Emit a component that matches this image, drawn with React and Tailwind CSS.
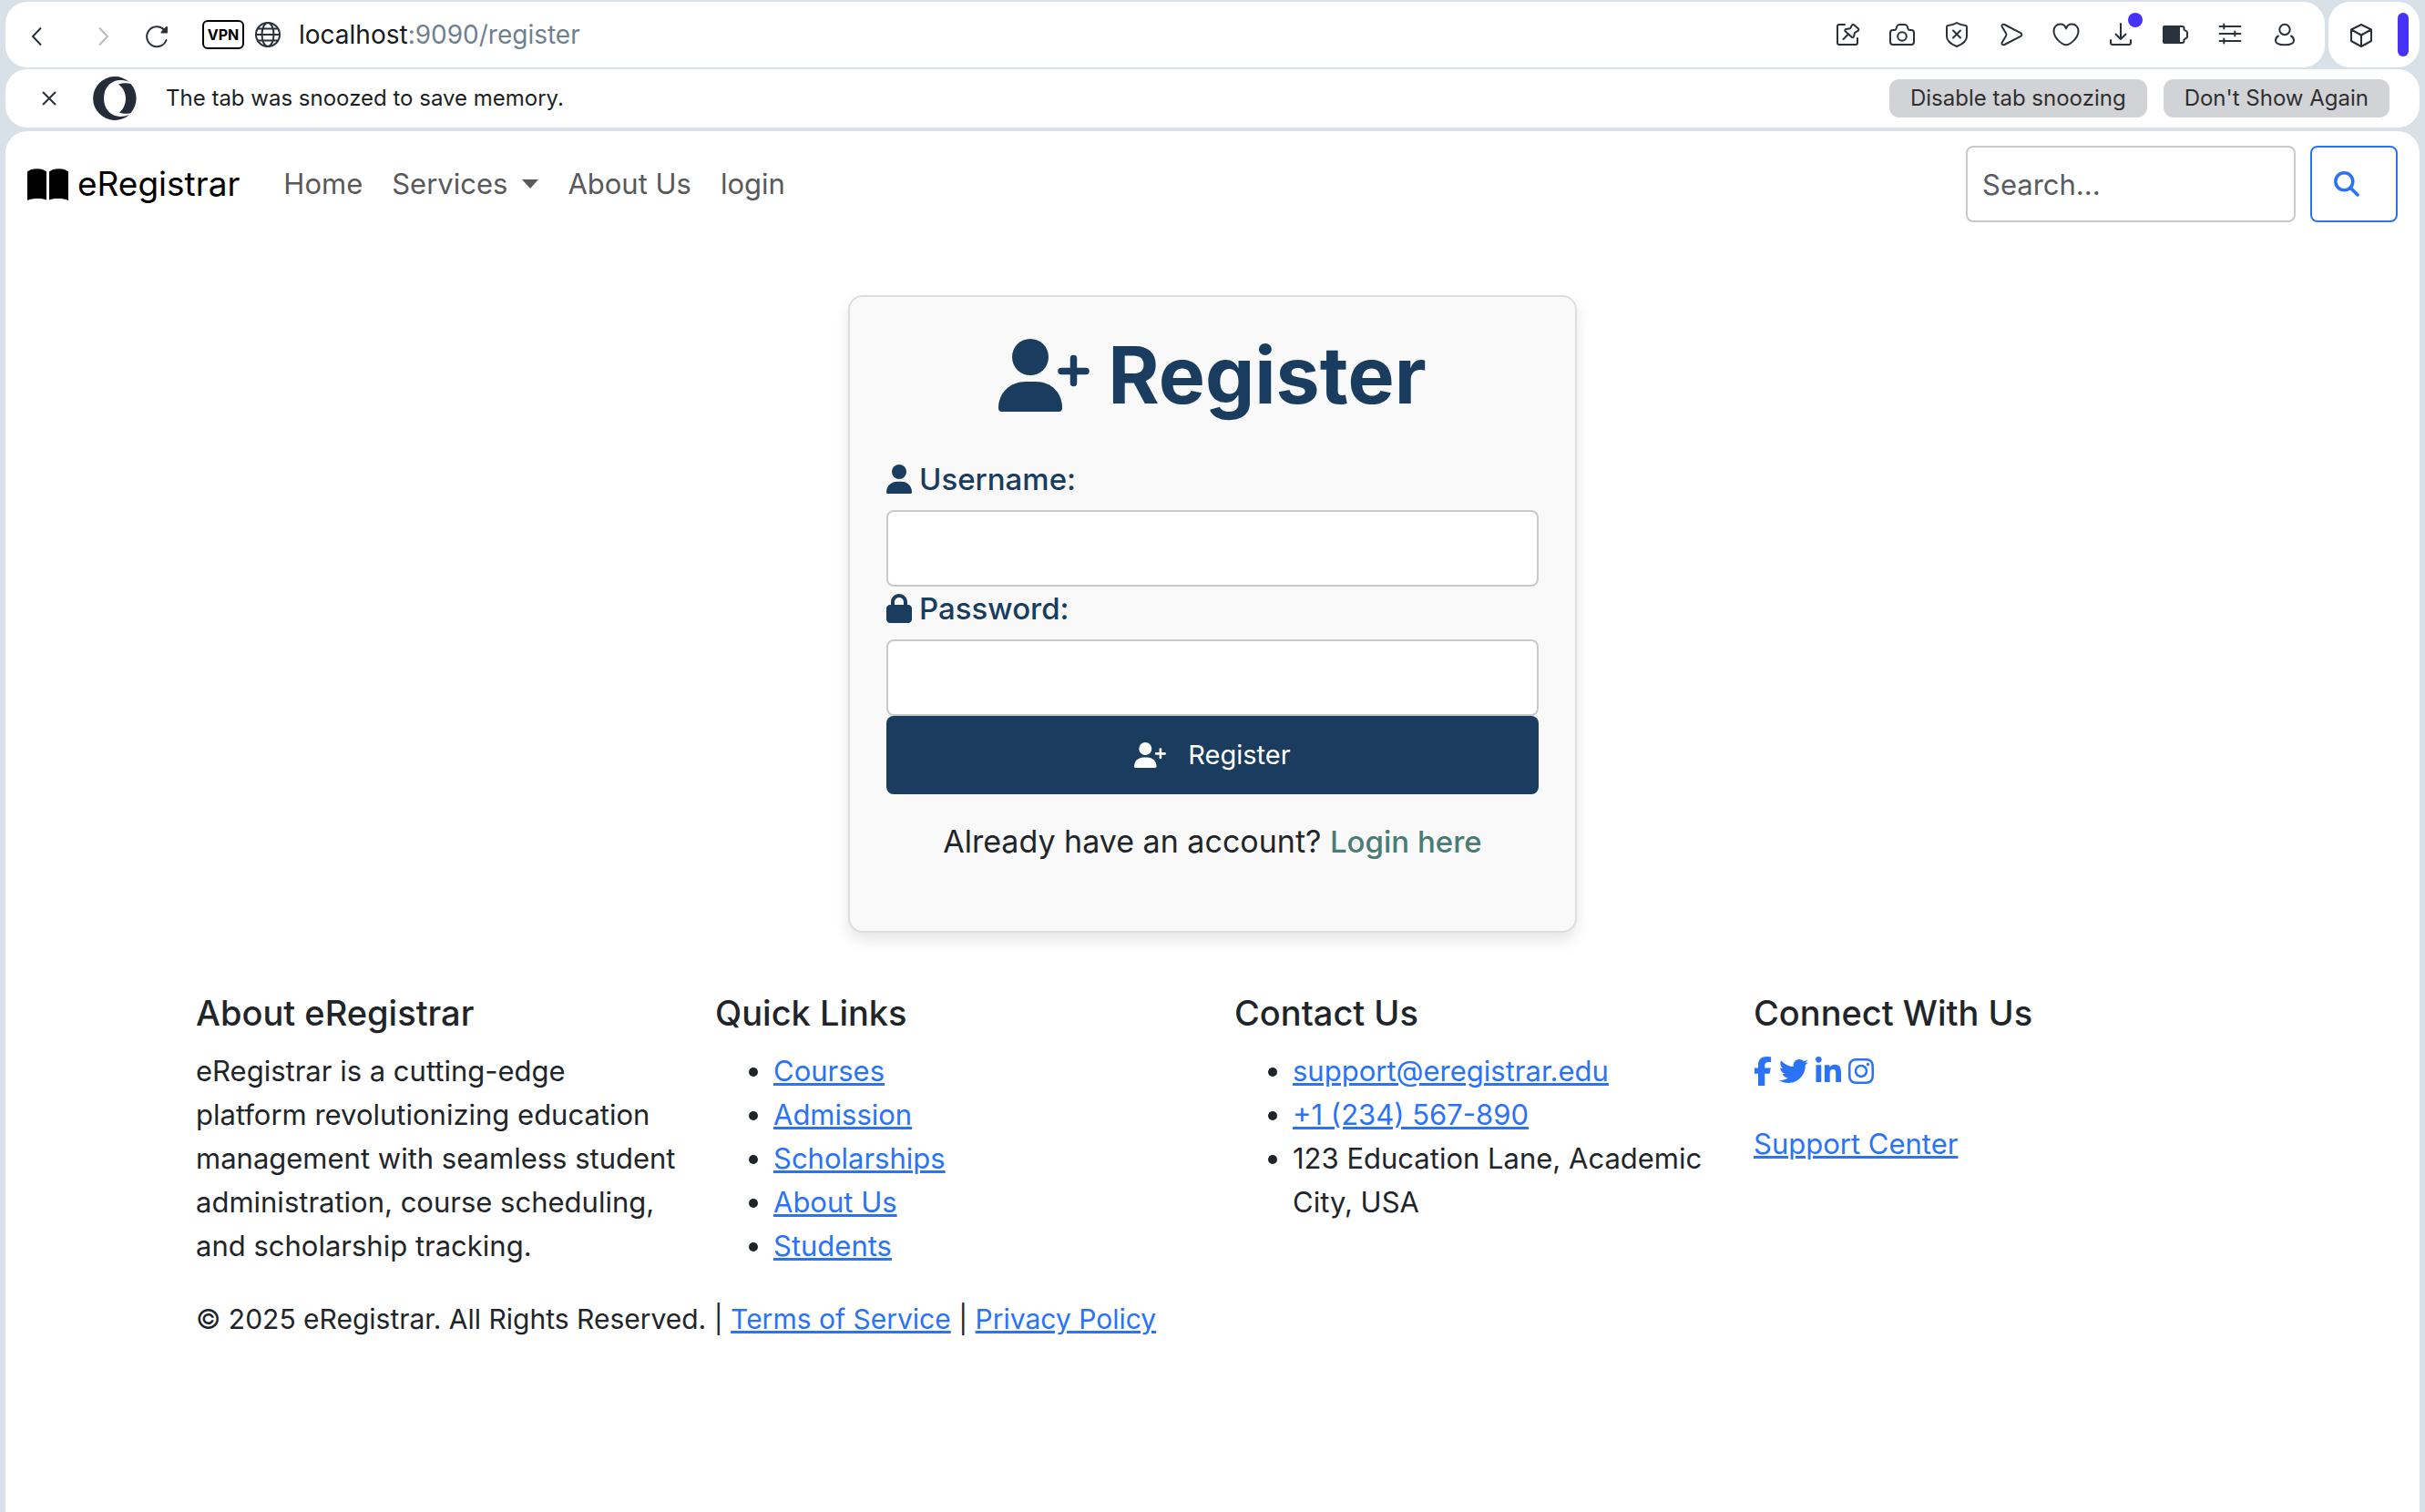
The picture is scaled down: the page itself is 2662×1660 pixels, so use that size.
import { FaLock, FaFacebookF, FaTwitter, FaLinkedinIn, FaInstagram } from "react-icons/fa6";

const fieldClass =
  "block h-[84px] w-full rounded-lg border-2 border-[#c9c9c9] bg-white px-4 text-[31px] text-[#212529] outline-none";
const linkClass = "text-[#2a72f8] underline decoration-[3px] underline-offset-2";

function LineIcon({ className = "h-8 w-8", children }) {
  return (
    <svg
      viewBox="0 0 32 32"
      className={className}
      fill="none"
      stroke="currentColor"
      strokeWidth="2"
      strokeLinecap="round"
      strokeLinejoin="round"
      aria-hidden="true"
    >
      {children}
    </svg>
  );
}

function UserShape() {
  return (
    <>
      <circle cx="35" cy="20" r="20" />
      <path d="M0 76C0 59 13 47 30 47H41C58 47 70 59 70 76Q70 80 66 80H4Q0 80 0 76Z" />
    </>
  );
}

function UserIcon() {
  return (
    <svg viewBox="0 0 70 80" className="h-8 w-7 shrink-0" fill="currentColor" aria-hidden="true">
      <UserShape />
    </svg>
  );
}

function UserPlusIcon({ className }) {
  return (
    <svg viewBox="0 0 100 80" className={className} fill="currentColor" aria-hidden="true">
      <UserShape />
      <path
        d="M82.500 21.500V48.500M69 35.500H96"
        fill="none"
        stroke="currentColor"
        strokeWidth="7.500"
        strokeLinecap="round"
      />
    </svg>
  );
}

function BookIcon() {
  return (
    <svg viewBox="0 0 45 35" className="h-[35px] w-[45px] shrink-0" fill="currentColor" aria-hidden="true">
      <path d="M0 3.500C4-1 17-1 21 3.500V34.500C15 32.500 6 32.500 0 35Z" />
      <path d="M24 3.500C28-1 41-1 45 3.500V35C39 32.500 30 32.500 24 34.500Z" />
    </svg>
  );
}

function OperaLogo() {
  return (
    <svg viewBox="0 0 48 48" className="h-12 w-12 shrink-0" fill="#232c38" aria-hidden="true">
      <path d="M40 6A24 24 0 1 0 40 42C24 48 12 39 12 24C12 9 24 0 40 6Z" />
      <path d="M28 8.500C33 7 38 7 41.500 8A24 24 0 0 1 41.500 40C38 41.200 33 41.200 29 39.500C33.500 36 36 30 36 24C36 18 33 12 28 8.500Z" />
    </svg>
  );
}

const toolbarIcons = [
  {
    label: "Pin page",
    art: (
      <>
        <path d="M13 5H7a2 2 0 0 0-2 2v18a2 2 0 0 0 2 2h18a2 2 0 0 0 2-2v-5" />
        <path d="M21 5.500Q22.500 4.300 24 6L28 9.500Q29 11 27 12.200L24 14L23 18Q22 20 20.500 18.500L13.800 12.500Q12.500 11 14.500 10L19 9.300ZM17 15.500L11.500 21" />
      </>
    ),
  },
  {
    label: "Snapshot",
    art: (
      <>
        <path d="M3 24V14a3 3 0 0 1 3-3h1.500a2 2 0 0 0 2-1.500l.8-2.500a3 3 0 0 1 3-2h5.400a3 3 0 0 1 3 2l.8 2.500a2 2 0 0 0 2 1.500H26a3 3 0 0 1 3 3v10a3 3 0 0 1-3 3H6a3 3 0 0 1-3-3Z" />
        <circle cx="16" cy="18" r="4.800" />
      </>
    ),
  },
  {
    label: "Ad blocker",
    art: (
      <>
        <path d="M16 3c3 2 7 2.700 9.500 3a1.700 1.700 0 0 1 1.500 1.700V18c0 5-6 9-11 11-5-2-11-6-11-11V7.700A1.700 1.700 0 0 1 6.500 6C9 5.700 13 5 16 3Z" />
        <path d="M12 11.500l8 8M20 11.500l-8 8" />
      </>
    ),
  },
  {
    label: "Send",
    art: (
      <path d="M5.500 7C5 5.200 6.800 4.300 8.500 5L26 14.200C27.800 15.300 27.800 16.700 26 17.800L8.500 27C6.800 27.700 5 26.800 5.500 25L10 17.500Q11 16 10 14.500Z" />
    ),
  },
  {
    label: "Bookmark",
    art: (
      <path d="M16 9.500c.8-3 3.300-5 6.300-5 4.300 0 7.200 3.300 7.200 7.500C29.500 20 20 27.300 16 27.300S2.500 20 2.500 12c0-4.200 2.900-7.500 7.200-7.500 3 0 5.500 2 6.300 5Z" />
    ),
  },
  {
    label: "Downloads",
    badge: true,
    art: <path d="M16 4v17M10.500 15.500L16 21l5.500-5.500M5 22v3a2 2 0 0 0 2 2h18a2 2 0 0 0 2-2v-3" />,
  },
  {
    label: "Battery saver",
    art: (
      <>
        <path d="M4.500 7H23.500a2 2 0 0 1 2 2v1.500l2 1.500a2 2 0 0 1 1.500 1.700v4.600a2 2 0 0 1-1.500 1.700l-2 1.500V23a2 2 0 0 1-2 2H4.500A1.500 1.500 0 0 1 3 23.500v-15A1.500 1.500 0 0 1 4.500 7Z" />
        <path d="M3 7.500H20V24.500H3Z" fill="currentColor" />
      </>
    ),
  },
  {
    label: "Easy setup",
    art: <path d="M4.500 7h23M4.500 15h23M4.500 23h23M9.300 4.500v5M21.300 12.500v5M9.300 20.500v5" />,
  },
  {
    label: "Profile",
    art: (
      <>
        <circle cx="16" cy="10.500" r="5.700" />
        <path d="M9 17.500C7 18.500 6 20.500 6 22.500C6 26 10.500 27.300 16 27.300S26 26 26 22.500C26 20.500 25 18.500 23 17.500" />
      </>
    ),
  },
];

function Toolbar() {
  return (
    <div className="flex h-[72px] gap-1">
      <div className="flex flex-1 items-center rounded-3xl bg-white pr-3.5 pl-7 text-[#29323b]">
        <button type="button" aria-label="Back" className="mt-1">
          <svg viewBox="0 0 12 22" className="h-[22px] w-3" fill="none" stroke="currentColor" strokeWidth="2">
            <path d="M11 1.500L2 11L11 20.500" />
          </svg>
        </button>
        <button type="button" aria-label="Forward" className="mt-1 ml-[62px] text-[#b9bbbe]">
          <svg viewBox="0 0 12 22" className="h-[22px] w-3" fill="none" stroke="currentColor" strokeWidth="2">
            <path d="M1 1.500L10 11L1 20.500" />
          </svg>
        </button>
        <button type="button" aria-label="Reload" className="mt-1 ml-9">
          <LineIcon className="h-8 w-8">
            <path d="M26.500 20A11 11 0 1 1 24 8.500" />
            <path d="M27 6V11.500H21.500Z" fill="currentColor" />
          </LineIcon>
        </button>
        <button
          type="button"
          className="ml-[34px] flex h-8 w-[46px] items-center justify-center rounded-md border-2 border-black text-base font-bold text-black"
        >
          VPN
        </button>
        <button type="button" aria-label="Site information" className="ml-2.5">
          <LineIcon className="h-8 w-8">
            <circle cx="16" cy="16" r="13" />
            <ellipse cx="16" cy="16" rx="6.500" ry="13" />
            <path d="M3 16H29M5 9.500H27M5 22.500H27" />
          </LineIcon>
        </button>
        <p className="ml-[18px] text-[28px] leading-9 text-[#16191d]">
          localhost<span className="text-[#70808f]">:9090/register</span>
        </p>
        <div className="ml-auto flex">
          {toolbarIcons.map(({ label, art, badge }) => (
            <button key={label} type="button" aria-label={label} className="relative flex w-[60px] justify-center">
              <LineIcon>{art}</LineIcon>
              {badge && <span className="absolute -top-2 right-1.5 h-4 w-4 rounded-full bg-[#4632f5]" />}
            </button>
          ))}
        </div>
      </div>
      <div className="flex items-center justify-between rounded-3xl bg-white pr-3 pl-5 text-[#29323b]">
        <button type="button" aria-label="Extensions" className="mr-6">
          <LineIcon>
            <path d="M16 5L27 10.500V23L16 29L5 23V10.500ZM5 10.500L16 16.500L27 10.500M16 16.500V29" />
          </LineIcon>
        </button>
        <span className="h-12 w-3 rounded-full bg-[#4632f5]" />
      </div>
    </div>
  );
}

function SnoozeBar() {
  const buttonClass = "h-[42px] rounded-[11px] bg-[#d2d3d7] px-[23px] text-[#2f2f2f]";
  return (
    <div className="mt-0.5 flex h-16 items-center rounded-3xl bg-white pr-[33px] pl-10 text-2xl text-[#1b1f24]">
      <button type="button" aria-label="Close">
        <svg viewBox="0 0 16 16" className="h-4 w-4" fill="none" stroke="#29323b" strokeWidth="2">
          <path d="M1 1L15 15M15 1L1 15" />
        </svg>
      </button>
      <span className="ml-10">
        <OperaLogo />
      </span>
      <p className="ml-8">The tab was snoozed to save memory.</p>
      <div className="ml-auto flex gap-[18px]">
        <button type="button" className={buttonClass}>Disable tab snoozing</button>
        <button type="button" className={buttonClass}>Don't Show Again</button>
      </div>
    </div>
  );
}

function NavBar() {
  return (
    <nav className="flex items-center justify-between px-6 py-4">
      <div className="flex items-center">
        <a href="#home" className="flex items-center gap-[10px] text-[37px] leading-[48px] text-black">
          <BookIcon />
          eRegistrar
        </a>
        <div className="ml-12 flex gap-8 text-[31px] leading-[48px] text-[#595959]">
          <a href="#home">Home</a>
          <button type="button" className="flex items-center">
            Services
            <svg viewBox="0 0 18 10" className="ml-4 h-2.5 w-[18px]" fill="currentColor" aria-hidden="true">
              <path d="M0 0H18L9 10Z" />
            </svg>
          </button>
          <a href="#about">About Us</a>
          <a href="#login">login</a>
        </div>
      </div>
      <form className="flex gap-4" onSubmit={(e) => e.preventDefault()}>
        <div className="w-[362px]">
          <input
            type="search"
            aria-label="Search"
            placeholder="Search..."
            className="block h-[84px] w-full rounded-lg border-2 border-[#c9c9c9] bg-white px-4 text-[31px] text-[#212529] outline-none placeholder:text-[#595c5f]"
          />
        </div>
        <button
          type="submit"
          aria-label="Submit search"
          className="flex h-[84px] w-24 items-center rounded-lg border-2 border-[#2a72f8] pl-6 text-[#2a72f8]"
        >
          <svg
            viewBox="0 0 28 28"
            className="h-7 w-7"
            fill="none"
            stroke="currentColor"
            strokeWidth="3.500"
            strokeLinecap="round"
            aria-hidden="true"
          >
            <circle cx="11.300" cy="11.300" r="9.500" />
            <path d="M18.500 18.500L26 26" />
          </svg>
        </button>
      </form>
    </nav>
  );
}

function RegisterCard() {
  return (
    <section className="mx-auto mt-16 w-full max-w-[800px] rounded-2xl border-2 border-[#dddddd] bg-[#f9f9f9] p-10 shadow-[0_8px_16px_rgba(0,0,0,0.1)]">
      <h1 className="mb-11 flex items-center justify-center gap-5 text-[86px] leading-[92px] font-bold text-[#1a3c5e]">
        <UserPlusIcon className="h-20 w-[100px] shrink-0" />
        Register
      </h1>
      <form onSubmit={(e) => e.preventDefault()}>
        <label
          htmlFor="username"
          className="mb-2.5 flex items-center gap-2 text-[33px] leading-[48px] font-medium text-[#1a3c5e]"
        >
          <UserIcon />
          Username:
        </label>
        <input id="username" type="text" className={fieldClass} />
        <label
          htmlFor="password"
          className="mb-2.5 flex items-center gap-2 text-[33px] leading-[48px] font-medium text-[#1a3c5e]"
        >
          <FaLock className="h-8 w-7 shrink-0" />
          Password:
        </label>
        <input id="password" type="password" className={fieldClass} />
        <button
          type="submit"
          className="flex h-[86px] w-full items-center justify-center gap-6 rounded-lg bg-[#1a3c5e] text-[29px] text-white"
        >
          <UserPlusIcon className="h-7 w-[35px]" />
          Register
        </button>
      </form>
      <p className="mt-7 mb-[34px] text-center text-[34px] leading-[48px] text-[#212529]">
        Already have an account?{" "}
        <a href="#login" className="text-[33px] font-medium text-[#4a7c76]">
          Login here
        </a>
      </p>
    </section>
  );
}

const quickLinks = ["Courses", "Admission", "Scholarships", "About Us", "Students"];
const socials = [
  { label: "Facebook", Icon: FaFacebookF, size: "h-8 w-5" },
  { label: "Twitter", Icon: FaTwitter, size: "h-8 w-8" },
  { label: "LinkedIn", Icon: FaLinkedinIn, size: "h-8 w-7" },
  { label: "Instagram", Icon: FaInstagram, size: "h-8 w-7" },
];

function Footer() {
  const heading = "mb-4 text-[38px] leading-[48px] font-medium";
  const list = "mb-8 list-disc pl-16";
  return (
    <footer className="mx-auto mt-16 w-full max-w-[2280px] text-[31px] leading-[48px] text-[#212529]">
      <div className="grid grid-cols-4">
        <div className="pr-4 pl-6">
          <h5 className={heading}>About eRegistrar</h5>
          <p className="mb-8">
            eRegistrar is a cutting-edge platform revolutionizing education management with seamless student
            administration, course scheduling, and scholarship tracking.
          </p>
        </div>
        <div className="pr-4 pl-6">
          <h5 className={heading}>Quick Links</h5>
          <ul className={list}>
            {quickLinks.map((name) => (
              <li key={name}>
                <a href="#links" className={linkClass}>{name}</a>
              </li>
            ))}
          </ul>
        </div>
        <div className="pr-4 pl-6">
          <h5 className={heading}>Contact Us</h5>
          <ul className={list}>
            <li><a href="mailto:support@eregistrar.edu" className={linkClass}>support@eregistrar.edu</a></li>
            <li><a href="tel:+1234567890" className={linkClass}>+1 (234) 567-890</a></li>
            <li>123 Education Lane, Academic City, USA</li>
          </ul>
        </div>
        <div className="pr-4 pl-6">
          <h5 className={heading}>Connect With Us</h5>
          <div className="mb-8 flex h-12 items-center gap-2 text-[#2a72f8]">
            {socials.map(({ label, Icon, size }) => (
              <a key={label} href="#social" aria-label={label}>
                <Icon className={size} />
              </a>
            ))}
          </div>
          <a href="#support" className={linkClass}>Support Center</a>
        </div>
      </div>
      <p className="px-6 text-[30px]">
        © 2025 eRegistrar. All Rights Reserved. | <a href="#terms" className={linkClass}>Terms of Service</a> |{" "}
        <a href="#privacy" className={linkClass}>Privacy Policy</a>
      </p>
    </footer>
  );
}

export default function App() {
  return (
    <div className="flex min-h-screen flex-col bg-[#d9e1e8] px-1.5 pt-0.5 font-['Inter',sans-serif]">
      <Toolbar />
      <SnoozeBar />
      <main className="mt-1 flex flex-1 flex-col rounded-t-3xl bg-white">
        <NavBar />
        <RegisterCard />
        <Footer />
      </main>
    </div>
  );
}
